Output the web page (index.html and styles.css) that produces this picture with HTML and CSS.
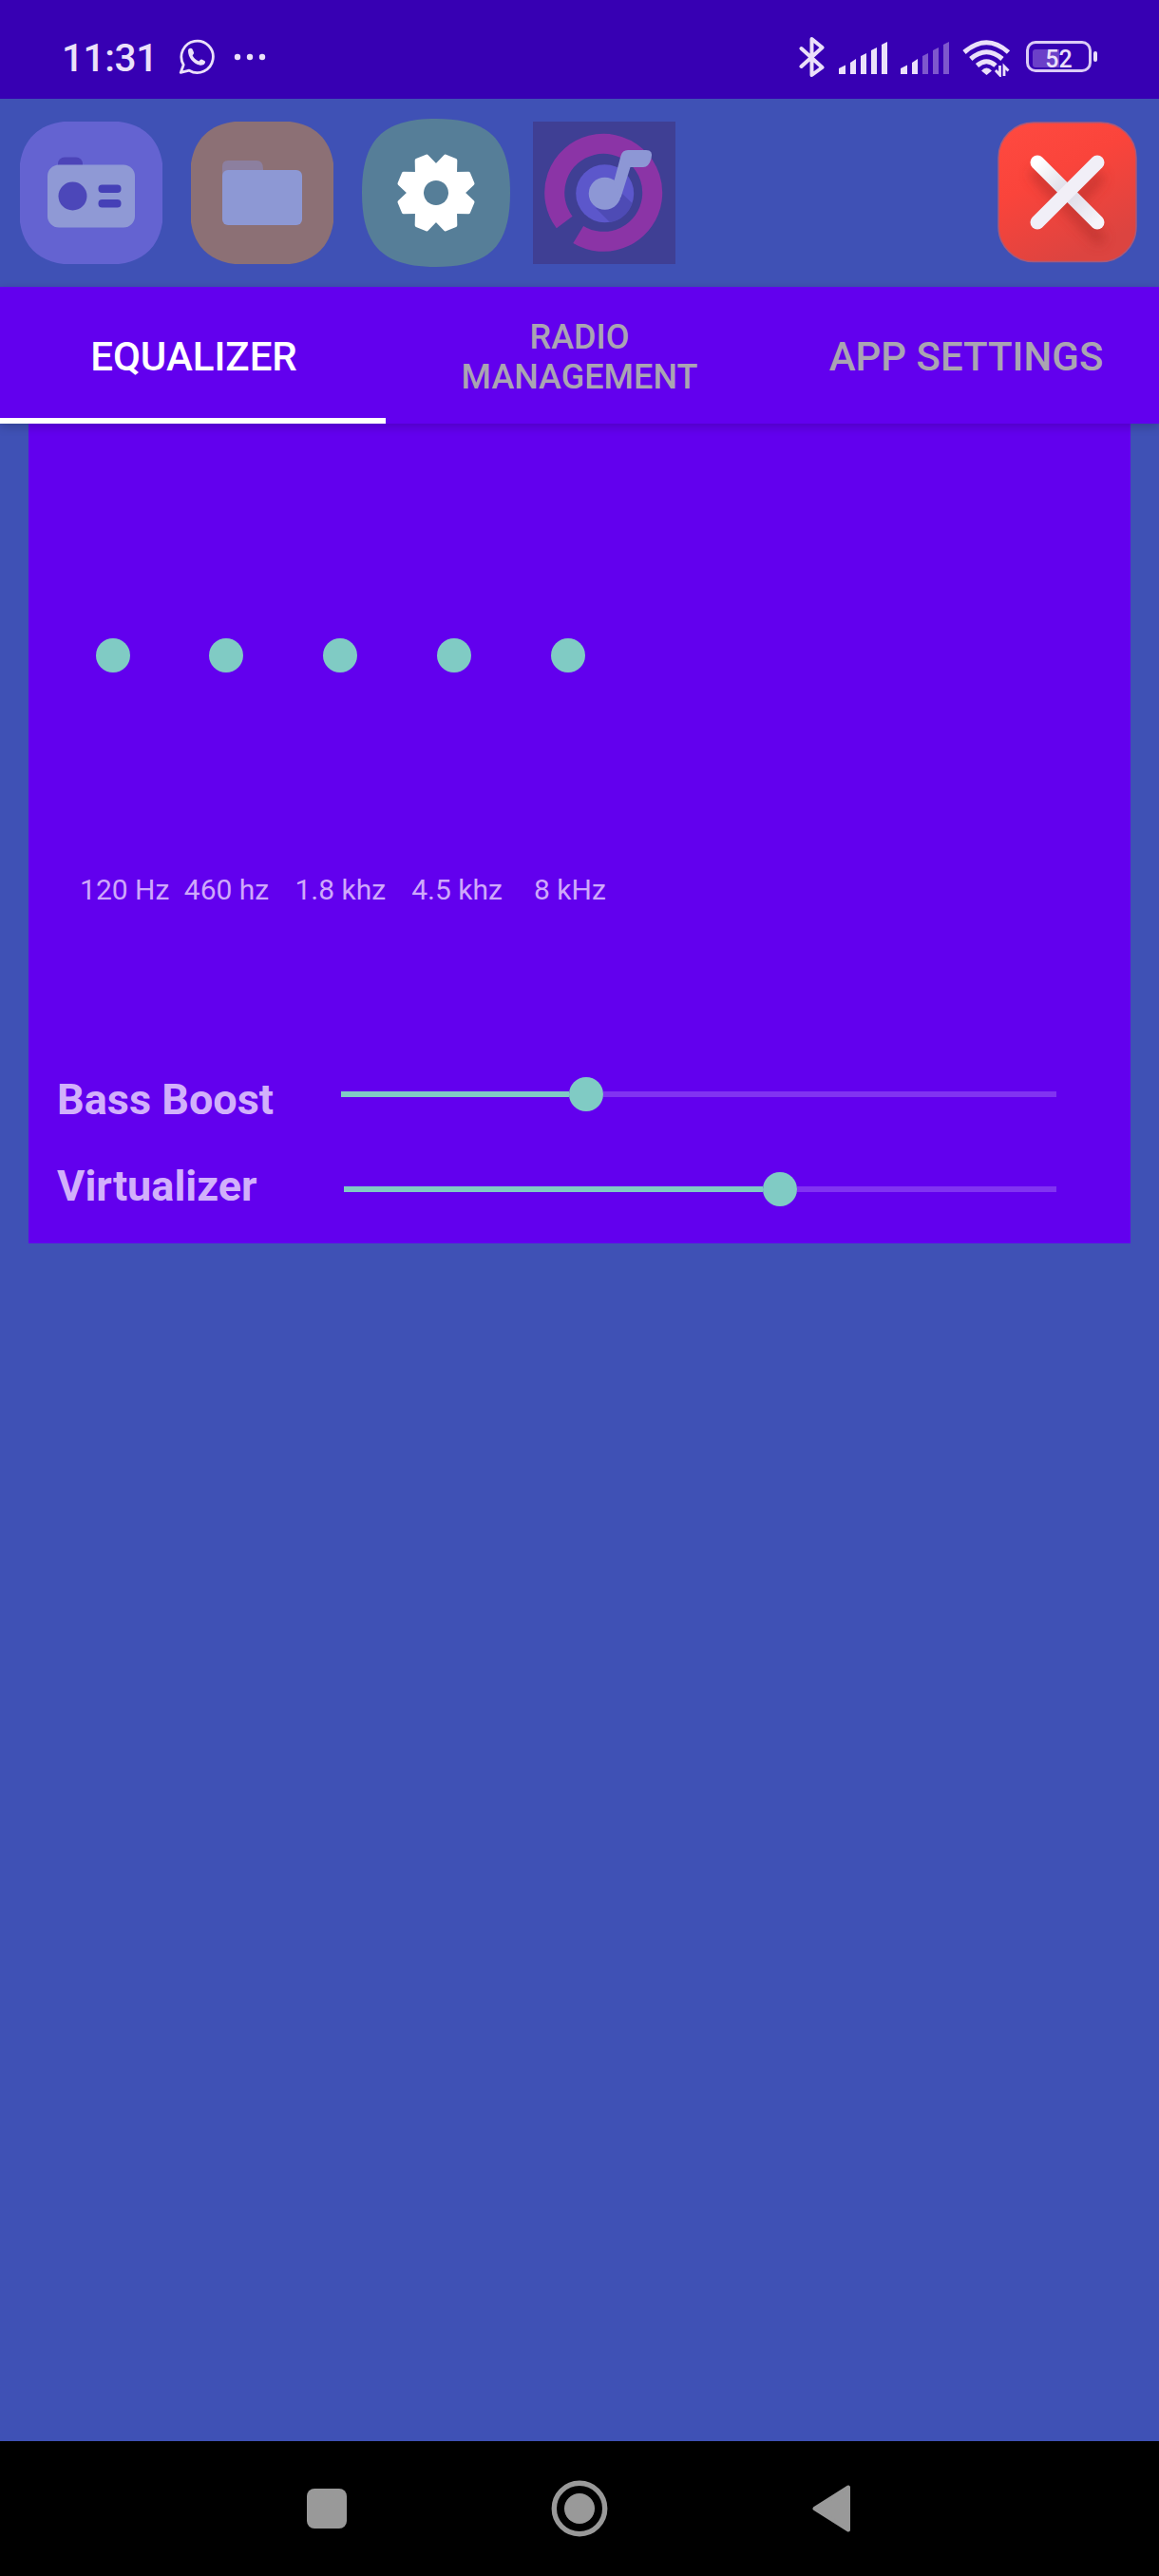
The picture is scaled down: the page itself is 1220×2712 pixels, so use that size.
FILE: index.html
```html
<!DOCTYPE html>
<html lang="en">
<head>
<meta charset="utf-8">
<title>Equalizer</title>
<link rel="stylesheet" href="styles.css">
</head>
<body>
<div class="screen">
  <header class="status">
    <div class="status-left">
      <span class="clock">11:31</span>
      <svg class="whatsapp" width="38" height="38" viewBox="0 0 38 38">
        <path d="M5.2 27.2A16.7 16.7 0 1 1 11.2 33.2L2.2 35.4Z" fill="none" stroke="#ebe0fa" stroke-width="2.8" stroke-linejoin="round"/>
        <path d="M10 12.5C10 10.5 11.500 9.800 12.700 9.800C14 9.800 14.500 10.500 15 11.800L16 14.200C16.300 15.200 15.500 16 14.600 17.200C15.500 19.500 18 22.200 21.400 23.500C22.600 22 23.400 21.200 24.400 21.600L27.200 22.900C28.300 23.500 28.200 24.500 27.600 25.700C26.500 27.500 24 28 22 27.500C15 26 10 19 10 12.500Z" fill="#ebe0fa"/>
      </svg>
      <svg class="more" width="34" height="8" viewBox="0 0 34 8" fill="#ebe0fa"><circle cx="4" cy="4" r="3.200"/><circle cx="17" cy="4" r="3.200"/><circle cx="30" cy="4" r="3.200"/></svg>
    </div>
    <div class="status-right">
      <svg width="28" height="44" viewBox="0 0 28 44"><path d="M2.500 13L24.500 33L13.500 41V3L24.500 12L2.500 32" fill="none" stroke="#ebe0fa" stroke-width="4" stroke-linejoin="round" stroke-linecap="round"/></svg>
      <svg class="signal" width="52" height="36" viewBox="0 0 52 36" fill="#ebe0fa"><path d="M0 29L7 25.500V35H0Z"/><path d="M12 23L18 19V35H12Z"/><path d="M23 16L29 13V35H23Z"/><path d="M34 10L40 7V35H34Z"/><path d="M45 4L51 1V35H45Z"/></svg>
      <svg class="signal" width="52" height="36" viewBox="0 0 52 36" fill="#ebe0fa"><path d="M0 29L7 25.500V35H0Z"/><path d="M12 23L18 19V35H12Z"/><g fill="#7e57cd"><path d="M23 16L29 13V35H23Z"/><path d="M34 10L40 7V35H34Z"/><path d="M45 4L51 1V35H45Z"/></g></svg>
      <svg class="wifi" width="51" height="40" viewBox="0 0 51 40" fill="none" stroke="#ebe0fa" stroke-width="5">
        <path d="M2 14Q25.500 -6.500 48.500 14"/><path d="M8.800 21Q25.500 6.500 42 21"/><path d="M15.500 28Q25.500 19.500 35 28"/>
        <path d="M20 33.500Q25.500 27.500 31 33.500L25.500 38Z" fill="#ebe0fa" stroke="none"/>
        <path d="M39.500 28V38L35 33M44 39V29L48.500 33.500" stroke-width="2.800"/>
      </svg>
      <div class="battery"><div class="battery-body"><i class="charge"></i><span>52</span></div><i class="nub"></i></div>
    </div>
  </header>

  <nav class="launcher">
    <svg width="150" height="150" viewBox="0 0 150 150">
      <path d="M0 44C4 18 20 3 46 0H104C130 3 146 18 150 44V106C146 132 130 147 104 150H46C20 147 4 132 0 106Z" fill="#6463d1"/>
      <rect x="40" y="37.500" width="26" height="18" rx="7" fill="#4c44b8"/>
      <rect x="29" y="45.500" width="92" height="66" rx="12" fill="#8f99d5"/>
      <circle cx="55.500" cy="78.500" r="15" fill="#4c47b9"/>
      <rect x="82.500" y="66.500" width="24" height="8.500" rx="4" fill="#4540b7"/><rect x="82.500" y="82" width="24" height="8.500" rx="4" fill="#4540b7"/>
    </svg>
    <svg width="150" height="150" viewBox="0 0 150 150">
      <path d="M0 44C4 18 20 3 46 0H104C130 3 146 18 150 44V106C146 132 130 147 104 150H46C20 147 4 132 0 106Z" fill="#8c7075"/>
      <path d="M33 60V47Q33 41 39 41H69Q76 41 76 50V60Z" fill="#8c7f9f"/>
      <rect x="33" y="51" width="84" height="58" rx="6" fill="#8d98d4"/>
    </svg>
    <svg class="gear" width="156" height="156" viewBox="0 0 156 156">
      <path d="M78 0C135 0 156 23 156 78S135 156 78 156S0 133 0 78S21 0 78 0Z" fill="#567e98"/>
      <g transform="translate(78 78) rotate(22.500)" fill="#fff" stroke="#fff" stroke-width="4" stroke-linejoin="round">
        <circle r="29"/>
        <path id="tooth" d="M-10.500 -27L-5.700 -39.300H5.700L10.500 -27V-20H-10.500Z"/>
        <use href="#tooth" transform="rotate(45)"/><use href="#tooth" transform="rotate(90)"/><use href="#tooth" transform="rotate(135)"/><use href="#tooth" transform="rotate(180)"/><use href="#tooth" transform="rotate(225)"/><use href="#tooth" transform="rotate(270)"/><use href="#tooth" transform="rotate(315)"/>
        <circle r="13" fill="#567e98" stroke="none"/>
      </g>
    </svg>
    <svg width="150" height="150" viewBox="0 0 150 150">
      <rect width="150" height="150" fill="#3f3f94"/>
      <path d="M33.200 106A51.500 51.500 0 1 1 47.700 119" fill="none" stroke="#8b34a6" stroke-width="21"/>
      <circle cx="75.700" cy="75.700" r="30.500" fill="#5c57cb"/>
      <path d="M66 91L81 106C91 105 101 97 104.500 86L93 75L86 90Z" fill="#4e4bb5"/>
      <circle cx="75.700" cy="75.700" r="17" fill="#8d97d5"/>
      <path d="M85 64L92.500 36Q94 30 100 30H119Q127 30 124.500 39Q122 48 116 48H102.500L92.500 80Z" fill="#8d97d5"/>
    </svg>
    <svg class="close" width="148" height="150" viewBox="0 0 148 150">
      <defs>
        <linearGradient id="red" x1="0" y1="0" x2=".5" y2="1"><stop offset="0" stop-color="#ff4a40"/><stop offset=".45" stop-color="#fa443b"/><stop offset="1" stop-color="#dc4440"/></linearGradient>
        <linearGradient id="bar" x1="0" y1="0" x2="1" y2="1"><stop offset="0" stop-color="#fff"/><stop offset=".5" stop-color="#dcdae6"/><stop offset="1" stop-color="#f6f4fa"/></linearGradient>
        <filter id="soft" x="-30%" y="-30%" width="160%" height="160%"><feGaussianBlur stdDeviation="6"/></filter>
      </defs>
      <rect x="1" y="1" width="145" height="146.500" rx="37" fill="url(#red)" stroke="#a85a7b" stroke-width="1.500"/>
      <path d="M42 56L106 122M105 60L78 88" stroke="#b42d2b" stroke-width="15" stroke-linecap="round" opacity=".55" filter="url(#soft)"/>
      <path d="M42 43L105 106" stroke="url(#bar)" stroke-width="15" stroke-linecap="round"/>
      <path d="M105 43L42 106" stroke="#f1eff7" stroke-width="15" stroke-linecap="round"/>
    </svg>
  </nav>

  <div class="tabs">
    <div class="tab active">EQUALIZER</div>
    <div class="tab two-line">RADIO<br>MANAGEMENT</div>
    <div class="tab">APP SETTINGS</div>
  </div>

  <main class="content">
    <section class="panel">
      <div class="bands">
        <div class="band first"><i class="thumb"></i><span>120 Hz</span></div>
        <div class="band"><i class="thumb"></i><span>460 hz</span></div>
        <div class="band"><i class="thumb"></i><span>1.8 khz</span></div>
        <div class="band fourth"><i class="thumb"></i><span>4.5 khz</span></div>
        <div class="band fifth"><i class="thumb"></i><span>8 kHz</span></div>
      </div>
      <div class="effect bass">
        <span class="effect-name">Bass Boost</span>
        <div class="slider"><i class="fill"></i><i class="thumb"></i><i class="rest"></i></div>
      </div>
      <div class="effect virtualizer">
        <span class="effect-name">Virtualizer</span>
        <div class="slider"><i class="fill"></i><i class="thumb"></i><i class="rest"></i></div>
      </div>
    </section>
  </main>

  <footer class="navbar">
    <svg width="42" height="42" viewBox="0 0 42 42"><rect width="42" height="42" rx="8" fill="#999"/></svg>
    <svg width="60" height="60" viewBox="0 0 60 60"><circle cx="30" cy="30" r="26.700" fill="none" stroke="#999" stroke-width="5.400"/><circle cx="30" cy="30" r="16" fill="#999"/></svg>
    <svg width="41" height="50" viewBox="0 0 41 50"><path d="M2.500 25L38 2.500V47.500Z" fill="#999" stroke="#999" stroke-width="4" stroke-linejoin="round"/></svg>
  </footer>
</div>
</body>
</html>
```
FILE: styles.css
```css
* { box-sizing: border-box; }
body { margin: 0; font-family: Roboto, "Liberation Sans", sans-serif; background: #3f51b5; }
svg { display: block; flex: none; }
i { display: block; }

.screen { width: 1220px; height: 2712px; display: flex; flex-direction: column; overflow: hidden; }

/* Status bar */
.status { height: 104px; flex: none; display: flex; justify-content: space-between; padding: 0 65px 0 65px; background: #3700b3; color: #ebe0fa; }
.status-left { display: flex; align-items: center; padding-top: 16px; }
.clock { width: 123px; font-size: 40.5px; font-weight: 500; line-height: 48px; padding-top: 2px; letter-spacing: -.4px; }
.more { margin-left: 20px; }
.status-right { display: flex; align-items: center; padding-top: 15px; }
.signal { margin-left: 14px; margin-top: 3px; }
.signal + .signal { margin-left: 13px; }
.wifi { margin-left: 13px; margin-top: 3px; }
.battery { display: flex; align-items: center; gap: 2px; margin-left: 16px; }
.battery-body { width: 69px; height: 33px; border: 3px solid #dccbf6; border-radius: 10px; padding: 4px; display: grid; align-items: center; }
.charge { grid-area: 1 / 1; width: 28px; height: 19px; border-radius: 3px 0 0 3px; background: #6b40c8; }
.battery span { grid-area: 1 / 1; text-align: center; font-size: 25px; font-weight: 500; line-height: 19px; padding-top: 3px; }
.nub { width: 4px; height: 11px; border-radius: 2px; background: #ebe0fa; }

/* Shortcut icons */
.launcher { height: 198px; flex: none; display: flex; align-items: center; gap: 30px; padding: 0 22px 0 21px; background: #3f51b5; }
.gear { margin-right: -6px; }
.close { margin-left: auto; }

/* Tabs */
.tabs { height: 144px; flex: none; display: grid; grid-template-columns: 406px 408px 406px; background: #6200ee; position: relative; z-index: 1; box-shadow: 0 3px 10px rgba(0, 0, 0, .2); }
.tab { display: flex; align-items: center; justify-content: center; text-align: center; font-size: 42px; font-weight: 500; line-height: 48px; color: #aaa4b2; border-bottom: 6px solid transparent; padding-top: 9px; }
.tab.active { color: #fff; border-bottom-color: #fff; padding-left: 2px; }
.two-line { font-size: 36px; line-height: 42px; padding-top: 10px; }

/* Equalizer panel */
.content { flex: 1; padding: 0 30px; }
.panel { height: 863px; background: #6200ee; color: #cfa8fb; }
.bands { display: flex; padding: 226px 0 0 28.800px; }
.band { width: 119.800px; display: flex; flex-direction: column; align-items: center; gap: 209px; }
.band span { font-size: 30px; line-height: 40px; white-space: nowrap; }
.thumb { width: 36px; height: 36px; border-radius: 50%; background: #80cbc4; flex: none; }
.first span { margin-left: 25px; }
.fourth span { margin-left: 6px; }
.fifth span { margin-left: 4px; }
.effect { display: flex; padding: 0 78px 0 30px; }
.effect-name { width: 299px; flex: none; font-size: 45px; font-weight: 700; line-height: 47px; color: #d2b0fb; }
.slider { flex: 1; height: 36px; display: flex; align-items: center; }
.fill { height: 6px; background: #80cbc4; }
.rest { height: 6px; flex: 1; background: #8133f1; }
.bass { margin-top: 177px; height: 100px; }
.bass .fill { width: 240px; }
.virtualizer .effect-name { width: 302px; line-height: 30px; }
.virtualizer .fill { width: 441px; }

/* System navigation */
.navbar { height: 142px; flex: none; display: flex; align-items: center; justify-content: space-between; padding: 0 324px 0 323px; background: #000; }
```
